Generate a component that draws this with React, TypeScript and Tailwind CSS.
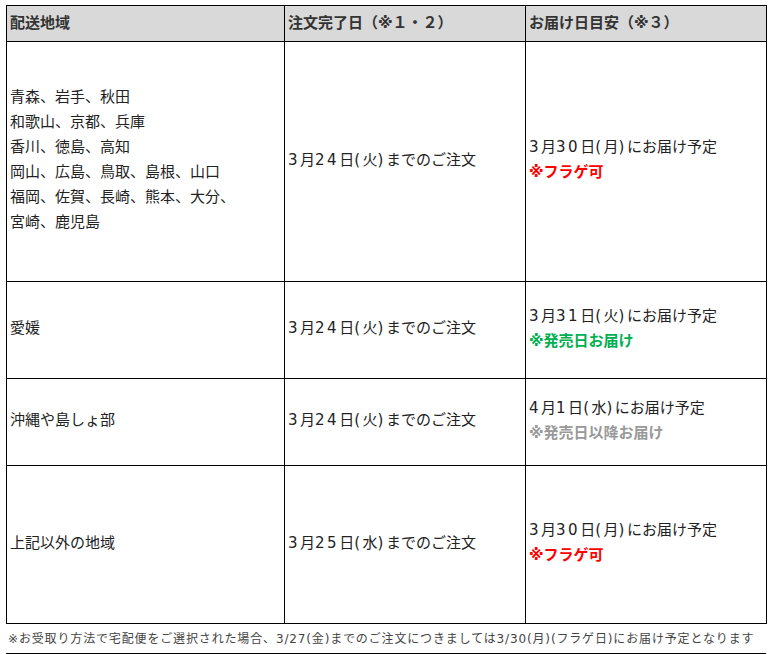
const font = {
  fontFamily: '"DejaVu Sans", "Noto Sans CJK JP", sans-serif',
};

type Row = {
  area: string[];
  order: string;
  date: string;
  note: string;
  noteClass: string;
  h: string;
};

const rows: Row[] = [
  {
    area: [
      "青森、岩手、秋田",
      "和歌山、京都、兵庫",
      "香川、徳島、高知",
      "岡山、広島、鳥取、島根、山口",
      "福岡、佐賀、長崎、熊本、大分、",
      "宮崎、鹿児島",
    ],
    order: "3月24日(火)までのご注文",
    date: "3月30日(月)にお届け予定",
    note: "※フラゲ可",
    noteClass: "text-[#ff0000]",
    h: "h-[240px]",
  },
  {
    area: ["愛媛"],
    order: "3月24日(火)までのご注文",
    date: "3月31日(火)にお届け予定",
    note: "※発売日お届け",
    noteClass: "text-[#00b050]",
    h: "h-[97px]",
  },
  {
    area: ["沖縄や島しょ部"],
    order: "3月24日(火)までのご注文",
    date: "4月1日(水)にお届け予定",
    note: "※発売日以降お届け",
    noteClass: "text-[#999999]",
    h: "h-[87px]",
  },
  {
    area: ["上記以外の地域"],
    order: "3月25日(水)までのご注文",
    date: "3月30日(月)にお届け予定",
    note: "※フラゲ可",
    noteClass: "text-[#ff0000]",
    h: "h-[158px]",
  },
];

// half-width runs in the reference font are wider, so space them out a bit
const Wide = ({ text }: { text: string }) => (
  <>
    {text.split(/([0-9()]+)/).map((part, i) =>
      /^[0-9()]+$/.test(part) ? (
        <span key={i} className="tracking-[2.5px]">
          {part}
        </span>
      ) : (
        <span key={i}>{part}</span>
      )
    )}
  </>
);

export default function App() {
  return (
    <div className="bg-white w-[772px] h-[654px] pt-[5px] pl-[6px] text-[#222]" style={font}>
      <table className="table-fixed border-collapse w-[760px] text-[15px] leading-[25px]">
        <colgroup>
          <col className="w-[278px]" />
          <col className="w-[241px]" />
          <col className="w-[241px]" />
        </colgroup>
        <thead>
          <tr className="h-[36px] bg-[#d9d9d9]">
            <th className="border border-black px-[3px] text-left font-bold text-[#333]">配送地域</th>
            <th className="border border-black px-[3px] text-left font-bold text-[#333]">注文完了日（※１・２）</th>
            <th className="border border-black px-[3px] text-left font-bold text-[#333]">お届け日目安（※３）</th>
          </tr>
        </thead>
        <tbody>
          {rows.map((r, i) => (
            <tr key={i} className={r.h}>
              <td className="border border-black px-[3px] pb-[3px] align-middle">
                {r.area.map((a) => (
                  <div key={a}>{a}</div>
                ))}
              </td>
              <td className="border border-black px-[3px] pb-[3px] align-middle">
                <Wide text={r.order} />
              </td>
              <td className="border border-black px-[3px] pb-[3px] align-middle">
                <div>
                  <Wide text={r.date} />
                </div>
                <div className={"font-bold " + r.noteClass}>{r.note}</div>
              </td>
            </tr>
          ))}
        </tbody>
      </table>
      <div className="w-[760px] h-[30px] border-b border-black flex items-center pl-[2px] text-[12px] tracking-[0.85px] text-[#444] whitespace-nowrap">
        ※お受取り方法で宅配便をご選択された場合、3/27(金)までのご注文につきましては3/30(月)(フラゲ日)にお届け予定となります
      </div>
    </div>
  );
}
